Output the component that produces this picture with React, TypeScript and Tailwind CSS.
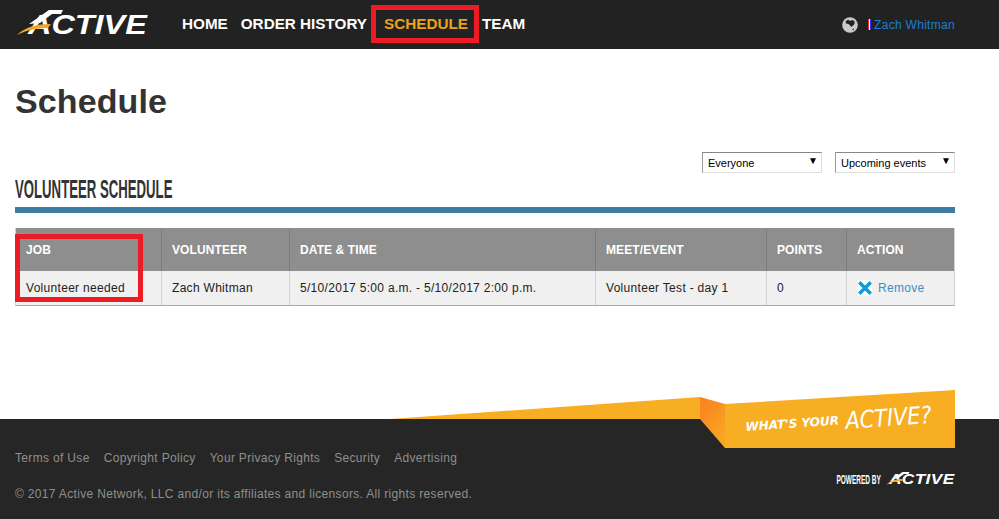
const sans = "font-['Liberation_Sans',Arial,sans-serif]";

function ActiveLogo({ small = false }: { small?: boolean }) {
  return (
    <div className={small ? "relative h-[15px] w-[72px]" : "relative h-[30px] w-[134px]"}>
      <span
        className={
          small
            ? "absolute left-[6px] top-[-1px] text-[15px] leading-[15px] font-bold italic text-white origin-left scale-x-[1.15]"
            : "absolute left-[13px] top-[2px] text-[27px] leading-[27px] font-bold italic text-white origin-left scale-x-[1.2]"
        }
      >
        ACTIVE
      </span>
      <svg viewBox="0 0 134 30" className="absolute inset-0 h-full w-full">
        <path d="M2 25 C10 17 22 14 36 14 L33 18 C22 18 12 20 2 25 Z" fill="#f5a623" />
        <path d="M14 14 L34 0 H48 L46 4 H37 L25 13 Z" fill="#ffffff" />
      </svg>
    </div>
  );
}

function Nav({ children, active = false }: { children: string; active?: boolean }) {
  return (
    <a className={"relative text-[15.25px] font-bold " + (active ? "text-[#eba31c]" : "text-white")}>
      {children}
      {active && <span className="absolute left-[-13px] top-[-8px] h-[38px] w-[108px] border-[5px] border-[#ed1c24]" />}
    </a>
  );
}

function Select({ label }: { label: string }) {
  return (
    <div className="flex h-[21px] w-[120px] items-center justify-between border border-[#dddddd] border-t-[#888888] border-l-[#999999] bg-white pl-[5px] pr-[3px] pt-[1px] text-[11px] text-black">
      <span>{label}</span>
      <span className="mb-[5px] text-[10px] leading-[10px]">▼</span>
    </div>
  );
}

const cols = [
  ["JOB", "Volunteer needed", "w-[146px]"],
  ["VOLUNTEER", "Zach Whitman", "w-[128px]"],
  ["DATE & TIME", "5/10/2017 5:00 a.m. - 5/10/2017 2:00 p.m.", "w-[306px]"],
  ["MEET/EVENT", "Volunteer Test - day 1", "w-[171px]"],
  ["POINTS", "0", "w-[80px]"],
];

function XIcon() {
  return (
    <svg viewBox="0 0 14 16" className="h-[16px] w-[14px] bg-white">
      <path d="M2.5 3.5 L11.5 12.5 M11.5 3.5 L2.5 12.5" stroke="#0d9ddb" strokeWidth="3.6" strokeLinecap="square" />
    </svg>
  );
}

function Globe() {
  return (
    <svg viewBox="0 0 16 16" className="h-[16px] w-[16px]">
      <circle cx="8" cy="8" r="7.8" fill="#c9c9c9" />
      <path d="M3.5 4.5 L6 2.5 L8 4 L10 3 L12.5 4 L12.5 7 L9.5 10 L8 8.5 L6.5 7 L4 6.5 Z" fill="#222222" />
      <path d="M10 12.5 L12 11.5 L11.5 13.5 Z" fill="#222222" />
    </svg>
  );
}

export default function App() {
  return (
    <div className={"relative flex min-h-[519px] w-[999px] flex-col overflow-hidden bg-white " + sans}>
      <header className="flex h-[49px] items-center bg-[#222222] pl-[15px] pr-[44px]">
        <ActiveLogo />
        <nav className="ml-[33px] flex items-center">
          <Nav>HOME</Nav>
          <span className="w-[13px]" />
          <Nav>ORDER HISTORY</Nav>
          <span className="w-[17px]" />
          <Nav active>SCHEDULE</Nav>
          <span className="w-[14px]" />
          <Nav>TEAM</Nav>
        </nav>
        <div className="ml-auto flex items-center">
          <Globe />
          <span className="ml-[10px] mr-[3px] h-[11px] w-[3px] bg-[linear-gradient(90deg,#e33333_33%,#ffffff_33%,#ffffff_66%,#3333ff_66%)]" />
          <a className="text-[12px] tracking-[0.3px] text-[#1b7fd0]">Zach Whitman</a>
        </div>
      </header>

      <main className="flex h-[370px] flex-col px-[15px] pr-[44px]">
        <h1 className="mt-[31px] text-[34px] leading-[42px] font-bold tracking-[0.1px] text-[#333333]">Schedule</h1>
        <div className="mt-[30px] flex justify-end gap-[13px]">
          <Select label="Everyone" />
          <Select label="Upcoming events" />
        </div>
        <div className="mt-[1px] h-[33px]">
          <h2 className="origin-left scale-x-[0.507] whitespace-nowrap text-[26px] leading-[30px] font-bold text-[#333333]">
            VOLUNTEER SCHEDULE
          </h2>
        </div>
        <div className="h-[6px] bg-[#3d7da3]" />
        <div className="relative mt-[15px] border-l border-r border-b border-[#d2d2d2] border-b-[#aaaaaa] text-[12px]">
          <div className="flex h-[43px] border-t border-[#8a8a8a] bg-[#8e8e8e] tracking-[0.1px]">
            {cols.map(([h, , w]) => (
              <div key={h} className={w + " flex items-center border-r border-[#7c7c7c] pl-[10px] font-bold text-white"}>
                {h}
              </div>
            ))}
            <div className="flex flex-1 items-center pl-[10px] font-bold text-white">ACTION</div>
          </div>
          <div className="flex h-[34px] bg-[#f0f0f0] tracking-[0.3px] text-[#222222]">
            {cols.map(([h, v, w]) => (
              <div key={h} className={w + " flex items-center border-r border-[#d2d2d2] pl-[10px]"}>
                {v}
              </div>
            ))}
            <div className="flex flex-1 items-center pl-[11px]">
              <XIcon />
              <a className="ml-[6px] text-[#3b8fc9]">Remove</a>
            </div>
          </div>
          <div className="absolute left-[-1px] top-[6px] h-[68px] w-[128px] border-[5px] border-[#ed1c24]" />
        </div>
      </main>

      <footer className="relative h-[100px] bg-[#262626] px-[15px] text-[12px] tracking-[0.33px] text-[#8f8f8f]">
        <div className="flex gap-[14px] pt-[32px] leading-[14px]">
          <a>Terms of Use</a>
          <a>Copyright Policy</a>
          <a>Your Privacy Rights</a>
          <a>Security</a>
          <a>Advertising</a>
        </div>
        <p className="mt-[22px] leading-[14px]">© 2017 Active Network, LLC and/or its affiliates and licensors. All rights reserved.</p>
        <div className="absolute right-[44px] top-[53px] flex items-center gap-[2px]">
          <span className="origin-right scale-x-[0.5] whitespace-nowrap text-[13px] leading-[15px] font-bold tracking-[0px] text-white">POWERED BY</span>
          <ActiveLogo small />
        </div>
      </footer>

      {/* promotional ribbon overlapping the footer */}
      <div className="absolute left-[390px] top-[390px] h-[58px] w-[565px]">
        <svg viewBox="0 0 565 58" className="absolute inset-0 h-full w-full">
          <defs>
            <linearGradient id="fold" x1="0" y1="0" x2="0.6" y2="1">
              <stop offset="0" stopColor="#f98020" />
              <stop offset="1" stopColor="#f8a623" />
            </linearGradient>
          </defs>
          <path d="M0 29 L310 7 L310 29 Z" fill="#f8ae22" />
          <path d="M310 7 L335 14 L335 58 L310 29 Z" fill="url(#fold)" />
          <path d="M335 14 L565 0 L565 58 L335 58 Z" fill="#f8ae22" />
        </svg>
        <div className="absolute left-[355px] top-[8px] flex -rotate-[4deg] items-baseline whitespace-nowrap font-['DejaVu_Sans',sans-serif] italic text-white">
          <span className="text-[12px] font-bold">WHAT'S YOUR</span>
          <span className="ml-[6px] origin-left translate-y-[5px] scale-x-[0.87] text-[24px] font-normal">ACTIVE?</span>
        </div>
      </div>
    </div>
  );
}
